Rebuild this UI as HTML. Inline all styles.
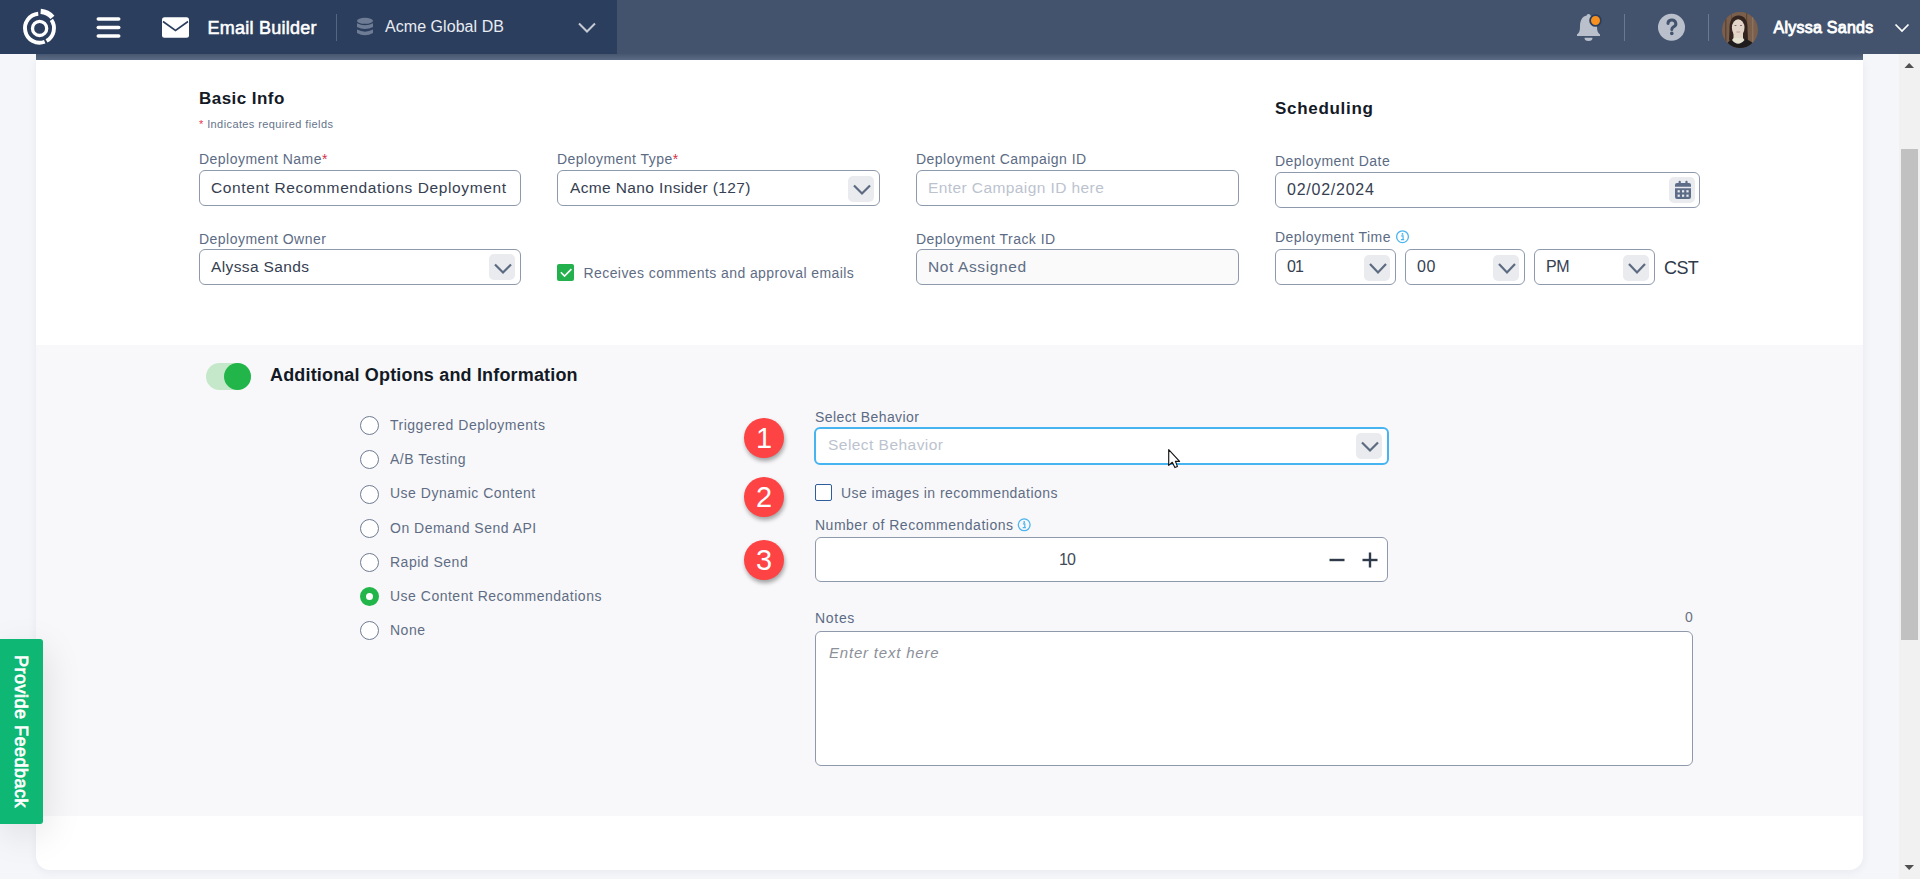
<!DOCTYPE html>
<html><head><meta charset="utf-8">
<style>
*{box-sizing:border-box;margin:0;padding:0}
html,body{width:1920px;height:879px;overflow:hidden;background:#f4f6fa;font-family:"Liberation Sans",sans-serif;}
svg{position:absolute;overflow:visible}
#hdr{position:absolute;left:0;top:0;width:1920px;height:54px;background:#43536e}
#hdrL{position:absolute;left:0;top:0;width:617px;height:54px;background:#2c3e5d}
#band{position:absolute;left:36px;top:54px;width:1827px;height:6px;background:linear-gradient(#47576f,#5e6d87)}
#card{position:absolute;left:36px;top:60px;width:1827px;height:810px;background:#fff;border-radius:0 0 14px 14px;box-shadow:0 2px 10px rgba(30,40,60,0.06)}
#addl{position:absolute;left:36px;top:345px;width:1827px;height:471px;background:#f8f8fa}
.t{position:absolute;white-space:nowrap;line-height:1}
.lbl{font-size:14px;color:#5c6b84;letter-spacing:0.47px}
.h{font-weight:bold;color:#131a26}
.inp{position:absolute;border:1.5px solid #8e99ab;border-radius:6px;background:#fff}
.val{font-size:15px;color:#364051;letter-spacing:0.7px}
.dd{position:absolute;width:26px;height:26px;border-radius:5px;background:#e9ebee}
.rad{position:absolute;width:19px;height:19px;border-radius:50%;border:1.5px solid #6e7b92;background:#fff}
.rl{font-size:14px;color:#5f6d84;letter-spacing:0.5px}
.badge{position:absolute;width:40px;height:40px;border-radius:50%;background:#fd4343;box-shadow:1px 3px 4px rgba(0,0,0,0.35)}
.badge span{position:absolute;left:0;width:40px;text-align:center;top:6px;font-size:29px;line-height:1;color:#fff}
#sb{position:absolute;left:1899px;top:54px;width:21px;height:825px;background:#f1f1f1}
#thumb{position:absolute;left:1901px;top:149px;width:17px;height:491px;background:#c1c1c1}
</style></head><body>
<div id="hdr"></div>
<div id="hdrL"></div>
<div id="band"></div>
<div id="card"></div>
<div id="addl"></div>

<!-- header icons -->
<svg style="left:0;top:0" width="640" height="54" viewBox="0 0 640 54">
  <g fill="none" stroke="#fff">
    <path stroke-width="3.9" d="M51.38 19.88A14.5 14.5 0 0 1 46.53 40.88"/>
    <path stroke-width="3.9" d="M44.70 41.74A14.5 14.5 0 1 1 38.24 13.76"/>
    <path stroke-width="5.2" d="M40.68 11.34A16.9 16.9 0 0 1 52.45 17.34"/>
    <circle cx="39.6" cy="28.4" r="7.1" stroke-width="3.3"/>
  </g>
  <g fill="#fff">
    <rect x="96.5" y="17.2" width="24" height="3.6" rx="1.8"/>
    <rect x="96.5" y="25.7" width="24" height="3.6" rx="1.8"/>
    <rect x="96.5" y="34.2" width="24" height="3.6" rx="1.8"/>
    <rect x="162" y="17.2" width="27" height="20.5" rx="2.5"/>
  </g>
  <path d="M163 21.5 L175.5 30.5 L188 21.5" fill="none" stroke="#2c3e5d" stroke-width="1.6"/>
  <rect x="336" y="14" width="1" height="27" fill="#56667f"/>
  <g fill="#6e7d95">
    <ellipse cx="365" cy="20.8" rx="8" ry="3"/>
    <path d="M357 23.2 Q365 27.5 373 23.2 V27 Q365 31.2 357 27 Z"/>
    <path d="M357 29.6 Q365 33.8 373 29.6 V33 Q365 37.5 357 33 Z"/>
  </g>
  <polyline points="579,23.5 587,31.5 595,23.5" fill="none" stroke="#c5cbd5" stroke-width="2"/>
</svg>
<div class="t" style="left:207.5px;top:18.7px;font-size:18px;color:#fff;letter-spacing:0.25px;-webkit-text-stroke:0.55px #fff">Email Builder</div>
<div class="t" style="left:385px;top:19px;font-size:16px;color:#e8ecf2;letter-spacing:0.05px">Acme Global DB</div>

<svg style="left:1560px;top:0" width="360" height="54" viewBox="1560 0 360 54">
  <g fill="#b9c0cc">
    <circle cx="1588.5" cy="16" r="2"/>
    <path d="M1588.5 15.5 C1581 15.5 1580 22 1580 27 C1580 31 1579 33 1577 34.5 V36 H1600 V34.5 C1598 33 1597 31 1597 27 C1597 22 1596 15.5 1588.5 15.5Z"/>
    <path d="M1584.5 37.8 H1592.5 A4 3.3 0 0 1 1584.5 37.8Z"/>
  </g>
  <circle cx="1595.5" cy="20.5" r="5.4" fill="#f7901e" stroke="#2c3e5d" stroke-width="1.8"/>
  <rect x="1624" y="14" width="1" height="27" fill="#6a7991"/>
  <circle cx="1671.5" cy="27.3" r="13.5" fill="#b9c0cc"/>
  <path d="M1668 23.6 A3.9 3.6 0 1 1 1673.6 26.8 C1672.3 27.6 1671.8 28.3 1671.8 29.6" fill="none" stroke="#43536e" stroke-width="3" stroke-linecap="round"/>
  <circle cx="1671.8" cy="33.4" r="1.8" fill="#43536e"/>
  <rect x="1708" y="14" width="1" height="27" fill="#6a7991"/>
  <defs><clipPath id="av"><circle cx="1740" cy="30" r="18"/></clipPath></defs>
  <g clip-path="url(#av)">
    <rect x="1720" y="10" width="40" height="40" fill="#7a5f4c"/>
    <rect x="1725" y="10" width="1.5" height="40" fill="#5e4636"/>
    <rect x="1731" y="10" width="1" height="40" fill="#6a5040"/>
    <rect x="1746" y="10" width="1.2" height="40" fill="#5e4636"/>
    <rect x="1752" y="10" width="1.5" height="40" fill="#8c715d"/>
    <path d="M1729.5 30 Q1729 15.5 1738.5 15.5 Q1748 15.5 1747.5 30 L1748 40.5 H1729Z" fill="#33241f"/>
    <ellipse cx="1738.2" cy="27.8" rx="6.3" ry="8.6" fill="#e3d6c9"/>
    <rect x="1733.5" y="30" width="9.5" height="8" fill="#e3d6c9"/>
    <path d="M1724 52 Q1726 40 1735 38.5 H1742 Q1751 39.5 1754 45 L1756 52Z" fill="#1e1c1c"/>
    <path d="M1732 40 Q1738 47.5 1744.5 40 L1743 38 H1733.5Z" fill="#e6e2d2"/>
    <ellipse cx="1735.5" cy="25.5" rx="1.2" ry="0.6" fill="#7a6068"/>
    <ellipse cx="1741" cy="25.5" rx="1.2" ry="0.6" fill="#7a6068"/>
    <ellipse cx="1738.3" cy="32" rx="2.3" ry="0.8" fill="#d0a4a0"/>
  </g>
  <polyline points="1895.5,24.5 1902,31 1908.5,24.5" fill="none" stroke="#fff" stroke-width="1.7"/>
</svg>
<div class="t" style="left:1773.5px;top:20px;font-size:16px;color:#fff;letter-spacing:0.25px;-webkit-text-stroke:0.85px #fff">Alyssa Sands</div>

<!-- Basic Info -->
<div class="t h" style="left:199px;top:90.3px;font-size:17px;letter-spacing:0.45px">Basic Info</div>
<div class="t" style="left:199px;top:118.5px;font-size:11px;color:#65738a;letter-spacing:0.4px"><span style="color:#e8364f">*</span> Indicates required fields</div>

<div class="t lbl" style="left:199px;top:152.3px">Deployment Name<span style="color:#d6304a">*</span></div>
<div class="inp" style="left:199px;top:170px;width:322px;height:36px"></div>
<div class="t val" style="left:211px;top:180.4px;font-size:15.5px;letter-spacing:0.61px">Content Recommendations Deployment</div>

<div class="t lbl" style="left:557px;top:152.3px">Deployment Type<span style="color:#d6304a">*</span></div>
<div class="inp" style="left:557px;top:170px;width:323px;height:36px"></div>
<div class="t val" style="left:570px;top:179.9px;font-size:15.5px;letter-spacing:0.37px">Acme Nano Insider (127)</div>
<div class="dd" style="left:848px;top:176px"></div>

<div class="t lbl" style="left:916px;top:152.3px">Deployment Campaign ID</div>
<div class="inp" style="left:916px;top:170px;width:323px;height:36px"></div>
<div class="t val" style="left:928px;top:180.4px;font-size:15.5px;color:#bcc3cf;letter-spacing:0.41px">Enter Campaign ID here</div>

<div class="t h" style="left:1275px;top:99.5px;font-size:17px;letter-spacing:0.7px">Scheduling</div>
<div class="t lbl" style="left:1275px;top:154.4px">Deployment Date</div>
<div class="inp" style="left:1275px;top:172px;width:425px;height:36px"></div>
<div class="t val" style="left:1287px;top:181.6px;font-size:16px;letter-spacing:0.75px">02/02/2024</div>
<div class="dd" style="left:1669px;top:177px"></div>
<svg style="left:1675px;top:180px" width="16" height="19" viewBox="0 0 16 19">
  <g fill="#5d6d88">
    <rect x="3.6" y="0.8" width="2.2" height="4" rx="1"/>
    <rect x="10.4" y="0.8" width="2.2" height="4" rx="1"/>
    <path d="M0 4.8 Q0 3 2 3 H14 Q16 3 16 4.8 V6.8 H0Z"/>
    <path d="M0 8.2 H16 V17 Q16 19 14 19 H2 Q0 19 0 17Z"/>
  </g>
  <g fill="#e9ebee">
    <rect x="2.6" y="10.2" width="2.2" height="2.2"/><rect x="7" y="10.2" width="2.2" height="2.2"/><rect x="11.4" y="10.2" width="2.2" height="2.2"/>
    <rect x="2.6" y="14.6" width="2.2" height="2.2"/><rect x="7" y="14.6" width="2.2" height="2.2"/><rect x="11.4" y="14.6" width="2.2" height="2.2"/>
  </g>
</svg>

<div class="t lbl" style="left:199px;top:232.3px">Deployment Owner</div>
<div class="inp" style="left:199px;top:249px;width:322px;height:36px"></div>
<div class="t val" style="left:211px;top:258.5px;font-size:15.5px;letter-spacing:0.37px">Alyssa Sands</div>
<div class="dd" style="left:489px;top:254px"></div>

<div style="position:absolute;left:557px;top:264px;width:17px;height:17px;border-radius:2px;background:#22b14c"></div>
<svg style="left:557px;top:264px" width="17" height="17" viewBox="0 0 17 17"><polyline points="3.9,8.3 7.5,12 14.4,5.1" fill="none" stroke="#fff" stroke-width="1.6"/></svg>
<div class="t" style="left:583.5px;top:266.1px;font-size:14px;color:#5f6d84;letter-spacing:0.42px">Receives comments and approval emails</div>

<div class="t lbl" style="left:916px;top:232.3px">Deployment Track ID</div>
<div class="inp" style="left:916px;top:249px;width:323px;height:36px;background:#fafafa"></div>
<div class="t val" style="left:928px;top:258.9px;font-size:15.5px;color:#5f6d84;letter-spacing:0.61px">Not Assigned</div>

<div class="t lbl" style="left:1275px;top:230.3px">Deployment Time</div>
<svg style="left:1396px;top:230px" width="14" height="14" viewBox="0 0 14 14"><circle cx="6.5" cy="6.7" r="5.9" fill="none" stroke="#4cb4ee" stroke-width="1.3"/><circle cx="6.5" cy="3.9" r="0.9" fill="#4cb4ee"/><path d="M5.2 5.8 H7.1 V9.6 M5 9.6 H8.2" fill="none" stroke="#4cb4ee" stroke-width="1.2"/></svg>
<div class="inp" style="left:1275px;top:249px;width:121px;height:36px"></div>
<div class="inp" style="left:1405px;top:249px;width:120px;height:36px"></div>
<div class="inp" style="left:1534px;top:249px;width:121px;height:36px"></div>
<div class="dd" style="left:1364px;top:255px"></div>
<div class="dd" style="left:1493px;top:255px"></div>
<div class="dd" style="left:1623px;top:255px"></div>
<div class="t val" style="left:1287px;top:258.8px;font-size:16px;letter-spacing:-1px">01</div>
<div class="t val" style="left:1417px;top:258.8px;font-size:16px;letter-spacing:0.5px">00</div>
<div class="t val" style="left:1546px;top:258.8px;font-size:16px;letter-spacing:-0.5px">PM</div>
<div class="t" style="left:1664px;top:258.7px;font-size:18px;color:#2f3a4b;letter-spacing:-0.6px">CST</div>

<!-- chevrons -->
<svg style="left:0;top:0" width="1920" height="879" viewBox="0 0 1920 879">
  <g fill="none" stroke="#5d6b82" stroke-width="2.2">
    <polyline points="854,185.5 862,193.5 870,185.5"/>
    <polyline points="495,264.5 503,272.5 511,264.5"/>
    <polyline points="1370,264 1378,272.5 1386,264"/>
    <polyline points="1499,264 1507,272.5 1515,264"/>
    <polyline points="1629,264 1637,272.5 1645,264"/>
  </g>
</svg>

<!-- Additional -->
<div style="position:absolute;left:206px;top:363px;width:45px;height:27px;border-radius:14px;background:#c4e8c9"></div>
<div style="position:absolute;left:224px;top:363px;width:27px;height:27px;border-radius:50%;background:#22b54a"></div>
<div class="t h" style="left:270px;top:365.6px;font-size:18px;letter-spacing:0.17px">Additional Options and Information</div>

<div class="rad" style="left:360px;top:415.5px"></div>
<div class="rad" style="left:360px;top:450.0px"></div>
<div class="rad" style="left:360px;top:484.5px"></div>
<div class="rad" style="left:360px;top:518.5px"></div>
<div class="rad" style="left:360px;top:553.0px"></div>
<div class="rad" style="left:360px;top:587.0px;border:6px solid #22b54a"></div>
<div class="rad" style="left:360px;top:621.0px"></div>
<div class="t rl" style="left:390px;top:417.9px">Triggered Deployments</div>
<div class="t rl" style="left:390px;top:452.2px">A/B Testing</div>
<div class="t rl" style="left:390px;top:486.4px">Use Dynamic Content</div>
<div class="t rl" style="left:390px;top:520.7px">On Demand Send API</div>
<div class="t rl" style="left:390px;top:554.9px">Rapid Send</div>
<div class="t rl" style="left:390px;top:589.2px">Use Content Recommendations</div>
<div class="t rl" style="left:390px;top:623.4px">None</div>

<div class="badge" style="left:744px;top:418px"><span>1</span></div>
<div class="badge" style="left:744px;top:477px"><span>2</span></div>
<div class="badge" style="left:744px;top:540px"><span>3</span></div>

<div class="t lbl" style="left:815px;top:410.2px;letter-spacing:0.42px">Select Behavior</div>
<div class="inp" style="left:814px;top:427px;width:575px;height:38px;border:2px solid #46b4f1;border-radius:6px"></div>
<div class="t val" style="left:828px;top:436.8px;font-size:15.5px;color:#bcc3cf;letter-spacing:0.46px">Select Behavior</div>
<div class="dd" style="left:1356px;top:433px"></div>
<svg style="left:0;top:0" width="1920" height="879" viewBox="0 0 1920 879">
  <polyline points="1362,442.5 1370,450.5 1378,442.5" fill="none" stroke="#5d6b82" stroke-width="2.2"/>
</svg>

<div style="position:absolute;left:815px;top:484px;width:17px;height:17px;border-radius:2px;border:1.8px solid #2f5d9a;background:#fff"></div>
<div class="t" style="left:841px;top:486.4px;font-size:14px;color:#5f6d84;letter-spacing:0.45px">Use images in recommendations</div>

<div class="t lbl" style="left:815px;top:517.7px;letter-spacing:0.5px">Number of Recommendations</div>
<svg style="left:1017px;top:518px" width="14" height="14" viewBox="0 0 14 14"><circle cx="7.2" cy="6.8" r="5.9" fill="none" stroke="#4cb4ee" stroke-width="1.3"/><circle cx="7.2" cy="4" r="0.9" fill="#4cb4ee"/><path d="M5.9 5.9 H7.8 V9.7 M5.7 9.7 H8.9" fill="none" stroke="#4cb4ee" stroke-width="1.2"/></svg>
<div class="inp" style="left:815px;top:537px;width:573px;height:45px"></div>
<div class="t" style="left:1059px;top:551.7px;font-size:16px;color:#414a58;letter-spacing:-1px">10</div>
<svg style="left:0;top:0" width="1920" height="879" viewBox="0 0 1920 879">
  <g stroke="#2f3a4b" stroke-width="2.4">
    <line x1="1329.5" y1="560" x2="1344.5" y2="560"/>
    <line x1="1362.5" y1="560" x2="1377.5" y2="560"/>
    <line x1="1370" y1="552.5" x2="1370" y2="567.5"/>
  </g>
</svg>

<div class="t lbl" style="left:815px;top:610.6px;letter-spacing:0.7px">Notes</div>
<div class="t" style="left:1685px;top:609.8px;font-size:14px;color:#6b7280">0</div>
<div class="inp" style="left:815px;top:631px;width:878px;height:135px"></div>
<div class="t" style="left:829px;top:645.2px;font-size:15px;font-style:italic;color:#8b9099;letter-spacing:0.8px">Enter text here</div>

<!-- cursor -->
<svg style="left:1168px;top:449px" width="14" height="20" viewBox="0 0 14 20">
  <path d="M0.7 0.7 V16.4 L4.3 13.3 L6.9 18.6 L9.4 17.4 L7.4 12.3 H11.6 Z" fill="#fff" stroke="#151515" stroke-width="1.15" stroke-linejoin="round"/>
</svg>

<!-- feedback tab -->
<div style="position:absolute;left:0;top:639px;width:43px;height:185px;background:#0eb773;border-radius:0 3px 3px 0;box-shadow:4px 10px 36px rgba(0,0,0,0.10)"></div>
<div class="t" style="left:30px;top:655px;font-size:18px;color:#fff;transform-origin:0 0;transform:rotate(90deg);letter-spacing:0.5px;-webkit-text-stroke:0.7px #fff">Provide Feedback</div>

<!-- scrollbar -->
<div id="sb"></div>
<div id="thumb"></div>
<svg style="left:1899px;top:54px" width="21" height="825" viewBox="0 0 21 825">
  <path d="M5.5 14 L10.2 9 L15 14Z" fill="#505050"/>
  <path d="M5.5 811 L10.2 816 L15 811Z" fill="#505050"/>
</svg>
</body></html>
